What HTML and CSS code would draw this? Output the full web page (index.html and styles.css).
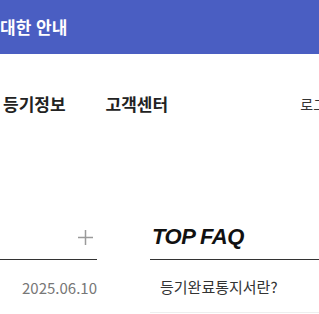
FILE: index.html
```html
<!DOCTYPE html>
<html lang="ko">

<head>
    <meta charset="UTF-8">
    <meta name="viewport" content="width=device-width, initial-scale=1.0">
    <title>등기 안내</title>
    <link rel="stylesheet" href="styles.css">
</head>

<body>
    <!-- 상단 안내 띠 -->
    <div class="topbar">
        <span class="topbar-text">대한 안내</span>
    </div>

    <!-- 메뉴 -->
    <nav class="gnb">
        <a href="#" class="menu">등기정보</a>
        <a href="#" class="menu">고객센터</a>
        <a href="#" class="login">로그인</a>
    </nav>

    <!-- 공지 / FAQ -->
    <div class="board">
        <section class="notice">
            <div class="col-head">
                <span></span>
                <a href="#" class="more" aria-label="더보기">
                    <svg width="17" height="17" viewBox="0 0 17 17">
                        <path d="M8.5 1v15M1 8.5h15" stroke="#9a9a9a" stroke-width="1.5" fill="none" />
                    </svg>
                </a>
            </div>
            <ul class="list">
                <li class="notice-item"><span class="date">2025.06.10</span></li>
            </ul>
        </section>

        <section class="faq">
            <div class="col-head">
                <h2 class="faq-title">TOP FAQ</h2>
            </div>
            <ul class="list">
                <li class="faq-item"><a href="#">등기완료통지서란?</a></li>
            </ul>
        </section>
    </div>
</body>

</html>
```

FILE: styles.css
```css
body {
    margin: 0;
    font-family: "Noto Sans CJK KR", "Noto Sans", sans-serif;
    color: #222;
    overflow: hidden;
}

a {
    text-decoration: none;
    color: inherit;
}

ul {
    list-style: none;
    margin: 0;
    padding: 0;
}

/* 상단 안내 띠 */
.topbar {
    height: 54px;
    background-color: #4a5ec2;
    display: flex;
    align-items: center;
}

.topbar-text {
    color: #fff;
    font-size: 17px;
    font-weight: bold;
    line-height: 24px;
}

/* 메뉴 */
.gnb {
    display: flex;
    align-items: center;
    margin-top: 38px;
    height: 24px;
    padding-left: 3px;
    white-space: nowrap;
}

.gnb .menu {
    font-size: 17px;
    font-weight: bold;
    line-height: 24px;
    color: #222;
    margin-right: 40px;
}

.gnb .login {
    margin-left: auto;
    margin-right: -20px;
    font-size: 14px;
    color: #333;
    flex-shrink: 0;
}

/* 공지 / FAQ */
.board {
    display: flex;
    gap: 53px;
    margin-top: 99px;
    white-space: nowrap;
}

.notice {
    width: 97px;
    flex-shrink: 0;
}

.faq {
    flex: 1;
    margin-right: -40px;
}

.col-head {
    height: 44px;
    display: flex;
    justify-content: space-between;
    align-items: center;
    border-bottom: 1px solid #333;
}

.more {
    display: flex;
    margin-right: 3px;
    margin-top: 1px;
}

.faq-title {
    margin: 0;
    font-family: "Liberation Sans", Arial, sans-serif;
    font-size: 22px;
    font-style: italic;
    font-weight: bold;
    color: #111;
    letter-spacing: -0.5px;
    padding-left: 2px;
}

.notice-item,
.faq-item {
    height: 52px;
    display: flex;
    align-items: center;
    border-bottom: 1px solid #eee;
}

.notice-item {
    justify-content: flex-end;
    border-bottom: none;
}

.date {
    font-size: 15px;
    color: #777;
    margin-top: 3px;
}

.faq-item {
    padding-left: 10px;
    font-size: 15px;
    color: #333;
}
```
